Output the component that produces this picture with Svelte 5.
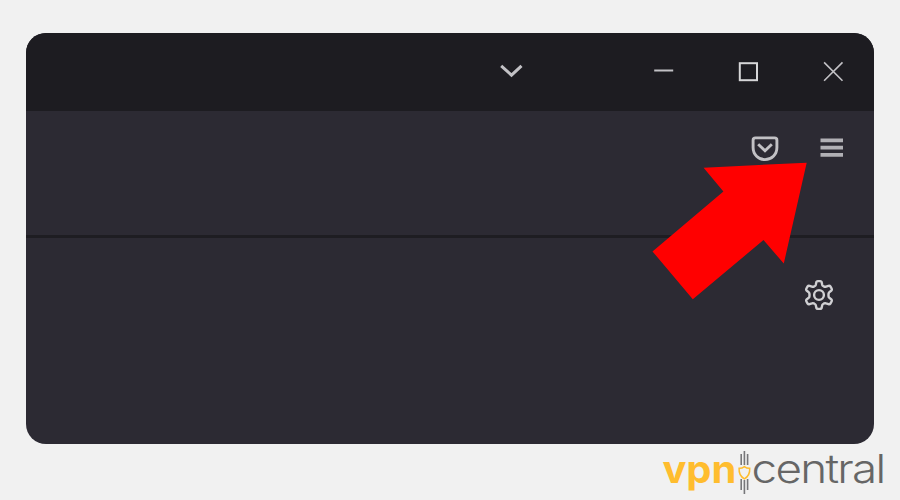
<script lang="ts">
  const menuLines = [3.4, 10.6, 17.9];
  const logoBars = [
    { x: 4.3, top: 4, bottom: 15 },
    { x: 7.5, top: 1, bottom: 15 },
    { x: 10.7, top: 4, bottom: 15 },
    { x: 4.3, top: 29, bottom: 40 },
    { x: 7.5, top: 30, bottom: 44 },
    { x: 10.7, top: 29, bottom: 40 },
  ];
</script>

<main class="page">
  <section class="browser">
    <header class="titlebar">
      <svg class="tabs-icon" width="28" height="20" viewBox="0 0 28 20" aria-label="List all tabs">
        <path d="M3.2 4.8 13.5 14.2 23.5 4.8" />
      </svg>
      <svg width="24" height="24" viewBox="0 0 24 24" aria-label="Minimize">
        <path class="minimize" d="M2.2 11.5H21.2" />
      </svg>
      <svg width="24" height="24" viewBox="0 0 24 24" aria-label="Maximize">
        <rect class="maximize" x="2.8" y="4.2" width="17.2" height="17" />
      </svg>
      <svg width="24" height="24" viewBox="0 0 24 24" aria-label="Close">
        <path class="close" d="M2.1 3.4 20.5 21.8M20.5 3.4 2.1 21.8" />
      </svg>
    </header>

    <div class="toolbar">
      <svg width="30" height="28" viewBox="0 0 30 28" aria-label="Save to Pocket">
        <path class="pocket" d="M5.4 3.9H24.6Q26.9 3.9 26.9 6.2V13.5C26.9 20.7 21.5 25.6 15 25.6S3.1 20.7 3.1 13.5V6.2Q3.1 3.9 5.4 3.9Z" />
        <path class="pocket" d="M8.2 10.2 15 16.7 21.8 10.2" />
      </svg>
      <svg class="menu" width="24" height="24" viewBox="0 0 24 24" aria-label="Open menu">
        {#each menuLines as y}
          <path d="M.5 {y}H23" />
        {/each}
      </svg>
    </div>

    <div class="content">
      <svg class="gear" width="32" height="32" viewBox="-.5 0 32 32" aria-label="Settings">
        <path d="M13.4 3Q13.7 2.1 14.7 2.1H17.3Q18.3 2.1 18.6 3L19.2 5.8Q19.5 6.7 20.5 7.2L21.2 7.6Q22.1 8 23.1 7.6L25.4 6.8Q26.7 6.4 27.4 7.5L28.7 9.7Q29.2 10.8 28.4 11.5L26.2 13.3Q25.5 14 25.5 15V17Q25.5 18 26.2 18.7L28.4 20.5Q29.2 21.2 28.7 22.3L27.4 24.5Q26.7 25.6 25.4 25.2L23.1 24.4Q22.1 24 21.2 24.4L20.5 24.8Q19.5 25.3 19.2 26.2L18.6 29Q18.3 29.9 17.3 29.9H14.7Q13.7 29.9 13.4 29L12.8 26.2Q12.5 25.3 11.5 24.8L10.8 24.4Q9.9 24 8.9 24.4L6.6 25.2Q5.3 25.6 4.6 24.5L3.3 22.3Q2.8 21.2 3.6 20.5L5.8 18.7Q6.5 18 6.5 17V15Q6.5 14 5.8 13.3L3.6 11.5Q2.8 10.8 3.3 9.7L4.6 7.5Q5.3 6.4 6.6 6.8L8.9 7.6Q9.9 8 10.8 7.6L11.5 7.2Q12.5 6.7 12.8 5.8Z" />
        <circle cx="16" cy="16" r="4.9" />
      </svg>
    </div>

    <svg class="arrow" width="156" height="138" viewBox="0 0 156 138" aria-hidden="true">
      <path d="M154.7 .7 51.6 5.7 71.4 29.5.5 89.4 40.8 137.3 111.5 78 131.8 101.6Z" />
    </svg>
  </section>

  <footer>
    <svg class="logo" width="226" height="50" viewBox="0 0 226 50">
      <text class="vpn" x="2.4" y="33.2" textLength="74" lengthAdjust="spacingAndGlyphs">vpn</text>
      <g transform="translate(76.9 0)">
        {#each logoBars as bar}
          <path class="bar" d="M{bar.x} {bar.top}V{bar.bottom}" />
        {/each}
        <path class="shield" d="M7.5 16.6Q10 18.5 12.8 18.3C13.2 23.5 11.7 26.5 7.5 28.9C3.3 26.5 1.8 23.5 2.2 18.3Q5 18.5 7.5 16.6Z" />
      </g>
      <text class="central" x="91.5" y="33.2" textLength="133" lengthAdjust="spacingAndGlyphs">central</text>
    </svg>
  </footer>
</main>

<style>
  :global(body) {
    background: #f1f1f1;
  }

  .page {
    box-sizing: border-box;
    height: 500px;
    padding: 33px 26px 0;
  }

  .browser {
    position: relative;
    height: 411px;
    border-radius: 20px;
    overflow: hidden;
    background: #2c2a33;
  }

  svg {
    display: block;
    flex-shrink: 0;
    fill: none;
    stroke: #c2c1c5;
  }

  .titlebar {
    box-sizing: border-box;
    height: 78px;
    padding: 0 28.5px 2px 0;
    display: flex;
    align-items: center;
    justify-content: flex-end;
    gap: 61px;
    background: #1d1c21;
  }

  .tabs-icon {
    margin-right: 65px;
    stroke-width: 3;
  }

  .minimize { stroke-width: 2; }

  .maximize { stroke: #d6d6d8; stroke-width: 2; }

  .close { stroke-width: 1.6; }

  .toolbar {
    box-sizing: border-box;
    height: 127px;
    padding: 23px 30px 0 0;
    display: flex;
    justify-content: flex-end;
    gap: 40px;
    border-bottom: 3px solid #1e1d22;
  }

  .pocket { stroke-width: 2.9; }

  .menu { margin-top: 3px; stroke: #b1b0b5; stroke-width: 3.6; }

  .content {
    display: flex;
    justify-content: flex-end;
    padding: 41px 40px 0 0;
  }

  .gear { overflow: visible; stroke: #d0d0d3; stroke-width: 2.4; }

  .gear path {
    transform: translateX(0.5px);
  }

  .gear circle {
    transform: translateX(0.5px);
  }

  .arrow {
    position: absolute;
    left: 626px;
    top: 129px;
    fill: #ff0000;
    stroke: none;
  }

  footer {
    display: flex;
    justify-content: flex-end;
    margin-right: -12px;
    padding-top: 6px;
  }

  .logo { overflow: visible; }

  text {
    font-size: 40px;
    stroke: none;
  }

  .vpn {
    font-family: Inter, "Open Sans", sans-serif;
    font-size: 39px;
    font-weight: 700;
    fill: #ffbd2e;
  }

  .central {
    font-family: Inter, "Open Sans", sans-serif;
    font-weight: 300;
    letter-spacing: -1.5px;
    fill: #666666;
  }

  .bar { stroke: #77777a; stroke-width: 1.6; }

  .shield { stroke: #ffbd2e; stroke-width: 1.5; }
</style>
